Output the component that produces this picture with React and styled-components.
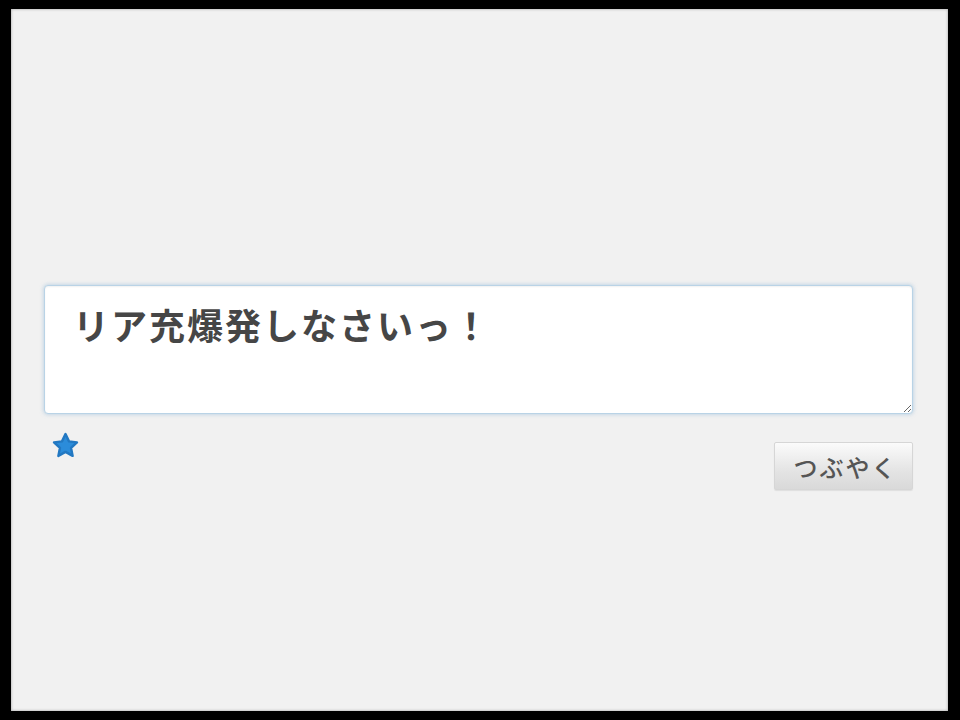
import styled, { createGlobalStyle } from "styled-components"

const Global = createGlobalStyle`
	html, body {
		margin: 0;
		padding: 0;
		background: #000;
	}
	* {
		box-sizing: border-box;
	}
`

const Frame = styled.div`
	width: 960px;
	height: 720px;
	background: #000;
	padding: 9px 12px 9px 11px;
	display: flex;
`

const Panel = styled.div`
	flex: 1;
	background: #f1f1f1;
	box-shadow: inset 0 0 3px rgba(0, 0, 0, 0.35);
	padding: 276px 35px 0 33px;
	display: flex;
	flex-direction: column;
`

const Field = styled.textarea`
	width: 100%;
	height: 129px;
	resize: both;
	background: #fff;
	border: 1px solid #b9d3e6;
	border-radius: 4px;
	box-shadow: 0 0 4px rgba(120, 170, 210, 0.55), inset 0 1px 2px rgba(0, 0, 0, 0.06);
	padding: 14px 28px;
	font-family: "Noto Sans CJK JP", "Noto Sans", sans-serif;
	font-size: 36px;
	font-weight: 600;
	letter-spacing: 2px;
	line-height: 48px;
	color: #464646;
	outline: none;
`

const Actions = styled.div`
	display: flex;
	justify-content: space-between;
	align-items: flex-start;
	padding-top: 17px;
`

const Star = styled.svg`
	width: 29px;
	height: 29px;
	margin-left: 7px;
`

const Button = styled.button`
	width: 139px;
	height: 48px;
	margin-top: 11px;
	border: 1px solid #d6d6d6;
	border-radius: 2px;
	background: linear-gradient(#fbfbfb, #e4e4e4 60%, #d9d9d9);
	box-shadow: 0 1px 1px rgba(0, 0, 0, 0.08);
	font-family: "Noto Sans CJK JP", "Noto Sans", sans-serif;
	font-size: 24px;
	font-weight: 500;
	color: #555;
	letter-spacing: 2px;
	padding: 0 0 0 4px;
`

export default function App() {
	return (
		<>
			<Global />
			<Frame>
				<Panel>
					<Field defaultValue="リア充爆発しなさいっ！" spellCheck={false} />
					<Actions>
						<Star viewBox="0 0 24 24">
							<path
								d="M12 2.5l2.9 6.1 6.6.8-4.9 4.6 1.3 6.6L12 17.3l-5.9 3.3 1.3-6.6-4.9-4.6 6.6-.8z"
								fill="#2b8cda"
								stroke="#2278c2"
								strokeWidth="2"
								strokeLinejoin="round"
							/>
						</Star>
						<Button>つぶやく</Button>
					</Actions>
				</Panel>
			</Frame>
		</>
	)
}
